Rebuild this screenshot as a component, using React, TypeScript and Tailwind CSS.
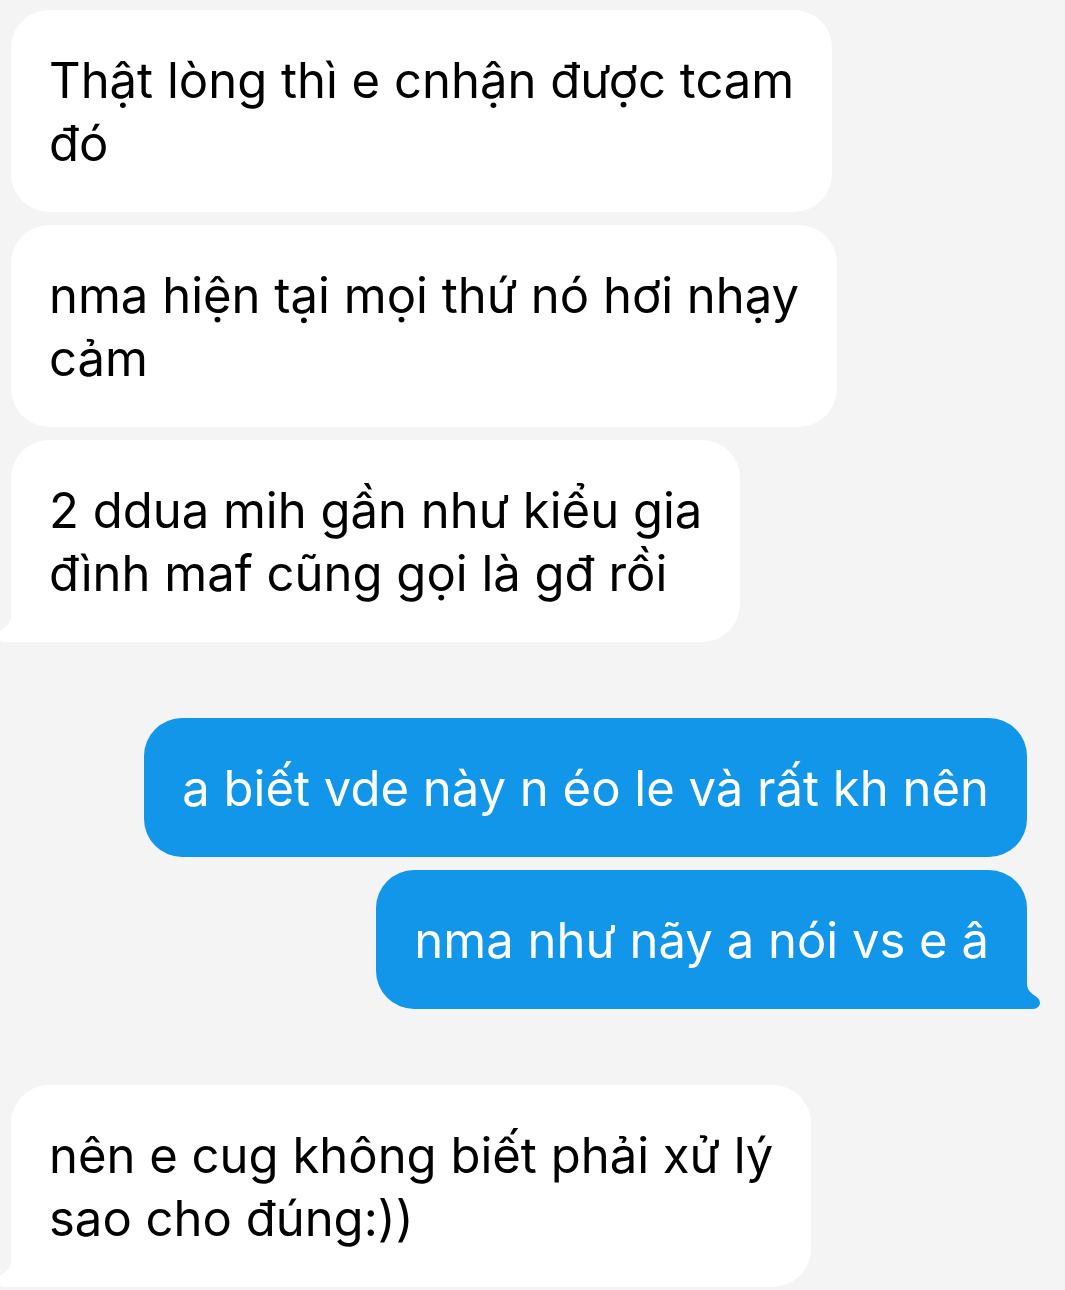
import React from 'react';

interface Message {
  id: number;
  lines: string[];
}

interface BubbleGroup {
  id: number;
  sent: boolean;
  messages: Message[];
}

const groups: BubbleGroup[] = [
  {
    id: 1,
    sent: false,
    messages: [
      { id: 1, lines: ['Thật lòng thì e cnhận được tcam', 'đó'] },
      { id: 2, lines: ['nma hiện tại mọi thứ nó hơi nhạy', 'cảm'] },
      { id: 3, lines: ['2 ddua mih gần như kiểu gia', 'đình maf cũng gọi là gđ rồi'] },
    ],
  },
  {
    id: 2,
    sent: true,
    messages: [
      { id: 4, lines: ['a biết vde này n éo le và rất kh nên'] },
      { id: 5, lines: ['nma như nãy a nói vs e â'] },
    ],
  },
  {
    id: 3,
    sent: false,
    messages: [{ id: 6, lines: ['nên e cug không biết phải xử lý', 'sao cho đúng:))'] }],
  },
];

// Small tail at the bottom corner of the last bubble in a group
const Tail: React.FC<{ sent: boolean }> = ({ sent }) => (
  <svg
    viewBox="0 0 14 28"
    aria-hidden="true"
    className={
      sent
        ? 'absolute -right-[13px] bottom-0 h-7 w-3.5 text-[#1296ea]'
        : 'absolute -left-[13px] bottom-0 h-7 w-3.5 -scale-x-100 text-white'
    }
  >
    <path d="M0 0H1V3C1 9 5 12 10 15.5C17 20 14 28 7 28H0Z" fill="currentColor" />
  </svg>
);

const Bubble: React.FC<{ message: Message; sent: boolean; last: boolean }> = ({ message, sent, last }) => {
  const color = sent ? 'bg-[#1296ea] text-white' : 'bg-white text-black';
  const corner = last ? (sent ? 'rounded-br-none' : 'rounded-bl-none') : '';

  return (
    <div className={`relative w-fit max-w-full rounded-[38px] px-[38px] pt-[39px] pb-[37px] ${color} ${corner}`}>
      <p>
        {message.lines.map((line) => (
          <span key={line} className="block whitespace-nowrap">
            {line}
          </span>
        ))}
      </p>
      {last && <Tail sent={sent} />}
    </div>
  );
};

const App: React.FC = () => {
  return (
    <main className="flex min-h-screen flex-col gap-[76px] overflow-hidden bg-[#f4f4f4] pt-[10px] pr-[38px] pb-1 pl-[11px] font-['Inter','Noto_Sans',sans-serif] text-[49px] leading-[63px]">
      {groups.map((group) => (
        <section
          key={group.id}
          className={`flex flex-col gap-[13px] ${group.sent ? 'items-end' : 'items-start'}`}
        >
          {group.messages.map((message, index) => (
            <Bubble
              key={message.id}
              message={message}
              sent={group.sent}
              last={index === group.messages.length - 1}
            />
          ))}
        </section>
      ))}
    </main>
  );
};

export default App;
